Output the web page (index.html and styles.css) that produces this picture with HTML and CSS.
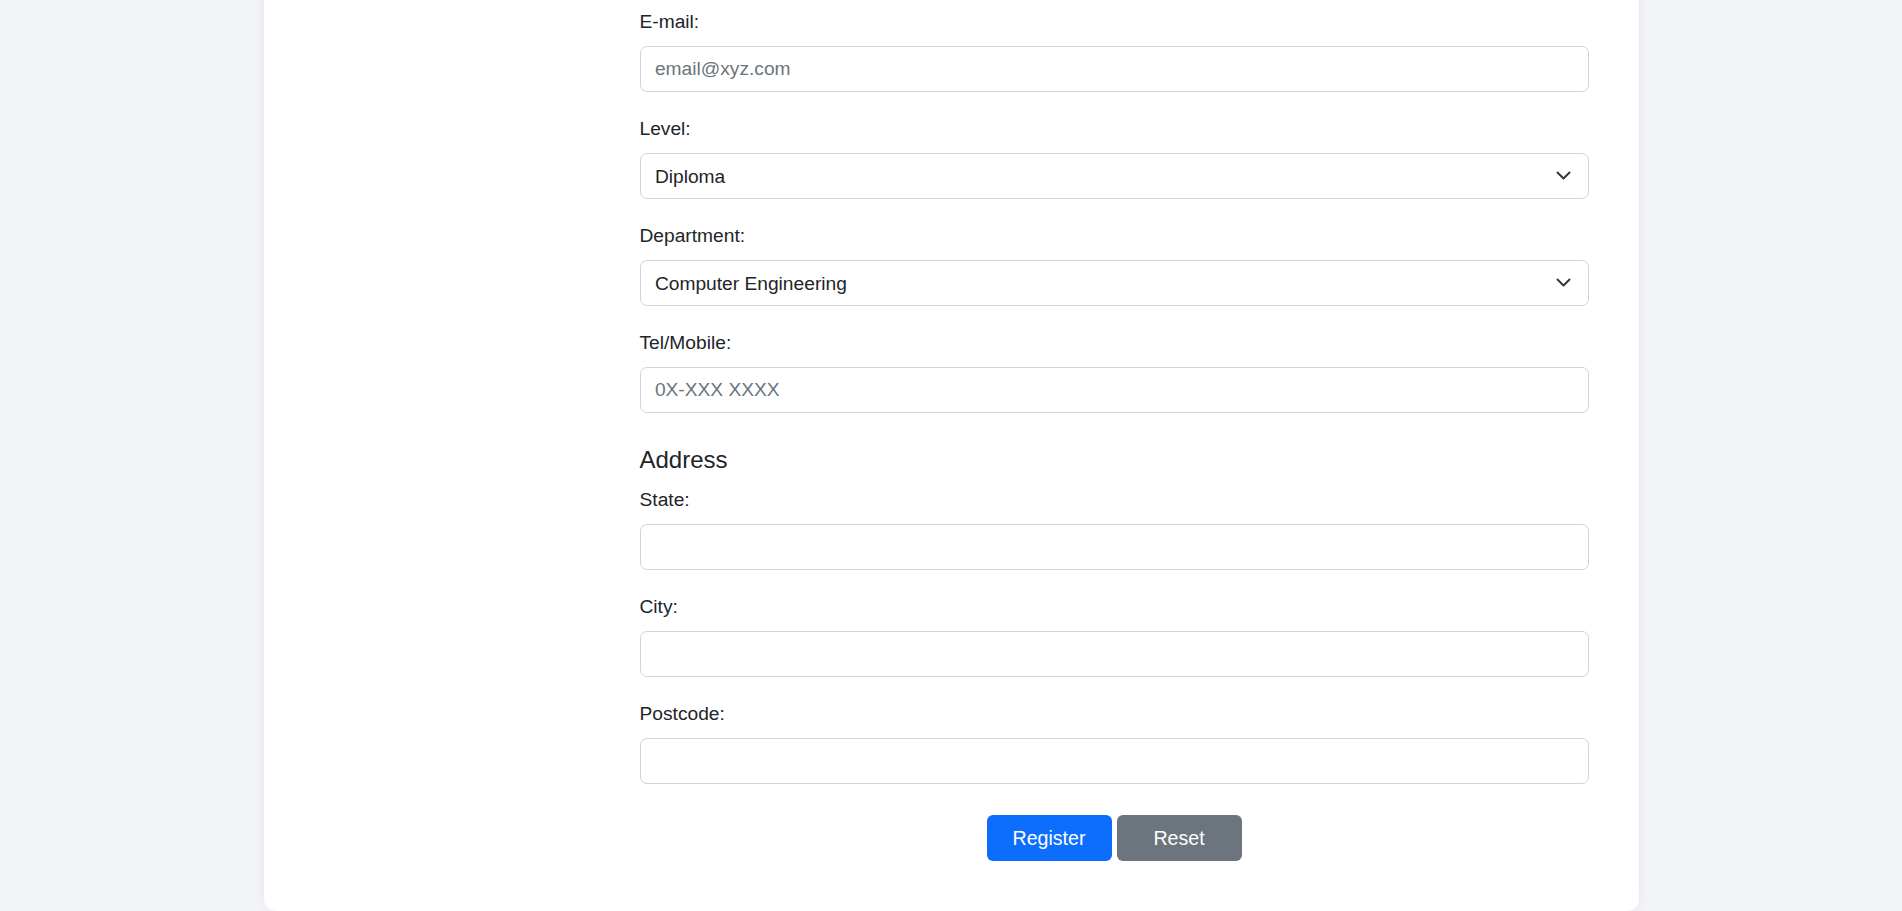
FILE: index.html
```html
<!DOCTYPE html>
<html lang="en">
<head>
<meta charset="utf-8">
<title>Register</title>
<link rel="stylesheet" href="styles.css">
</head>
<body>
<div class="page">
  <div class="card">
    <div class="aside"></div>
    <form class="form">
      <div class="field">
        <label for="email">E-mail:</label>
        <input id="email" class="control" type="email" placeholder="email@xyz.com">
      </div>
      <div class="field">
        <label for="level">Level:</label>
        <div class="select-wrap">
          <select id="level" class="control select">
            <option>Diploma</option>
          </select>
          <svg class="chev" viewBox="0 0 15 9" width="15" height="9"><path d="M1.5 1.5L7.5 7.5L13.5 1.5" fill="none" stroke="#343a40" stroke-width="2" stroke-linecap="round" stroke-linejoin="round"/></svg>
        </div>
      </div>
      <div class="field">
        <label for="dept">Department:</label>
        <div class="select-wrap">
          <select id="dept" class="control select">
            <option>Computer Engineering</option>
          </select>
          <svg class="chev" viewBox="0 0 15 9" width="15" height="9"><path d="M1.5 1.5L7.5 7.5L13.5 1.5" fill="none" stroke="#343a40" stroke-width="2" stroke-linecap="round" stroke-linejoin="round"/></svg>
        </div>
      </div>
      <div class="field">
        <label for="tel">Tel/Mobile:</label>
        <input id="tel" class="control" type="tel" placeholder="0X-XXX XXXX">
      </div>
      <h5 class="section">Address</h5>
      <div class="field">
        <label for="state">State:</label>
        <input id="state" class="control" type="text">
      </div>
      <div class="field">
        <label for="city">City:</label>
        <input id="city" class="control" type="text">
      </div>
      <div class="field">
        <label for="post">Postcode:</label>
        <input id="post" class="control" type="text">
      </div>
      <div class="actions">
        <button type="button" class="btn btn-primary">Register</button>
        <button type="reset" class="btn btn-secondary">Reset</button>
      </div>
    </form>
  </div>
</div>
</body>
</html>
```
FILE: styles.css
```css
html, body {
  margin: 0;
  padding: 0;
}
body {
  background: #f3f4f8;
  font-family: "Liberation Sans", Arial, sans-serif;
  font-size: 19.2px;
  color: #212529;
  overflow: hidden;
}
.page {
  width: 1375px;
  margin: 0 auto;
}
.card {
  margin-top: -20px;
  background: #fff;
  border-radius: 12px;
  box-shadow: 0 0 12px rgba(0, 0, 0, 0.06);
  display: grid;
  grid-template-columns: 376px 949px;
  padding: 27px 50px 50px 0;
}
.form {
  display: flex;
  flex-direction: column;
}
.field {
  margin-bottom: 22px;
}
.field label {
  display: block;
  line-height: 29px;
  margin-bottom: 10px;
}
.control {
  display: block;
  width: 100%;
  height: 46px;
  box-sizing: border-box;
  border: 1px solid #ced4da;
  border-radius: 7px;
  padding: 0 14.4px;
  font-family: inherit;
  font-size: 19.2px;
  color: #212529;
  background: #fff;
  outline: none;
}
.control::placeholder {
  color: #6c757d;
}
.select-wrap {
  position: relative;
}
.select {
  appearance: none;
  -webkit-appearance: none;
  padding-right: 48px;
}
.chev {
  position: absolute;
  right: 18px;
  top: 18px;
  pointer-events: none;
}
.section {
  margin: 10px 0 11px;
  font-size: 24px;
  font-weight: 400;
  line-height: 29px;
}
.actions {
  margin-top: 9px;
  display: flex;
  justify-content: center;
  gap: 5px;
}
.btn {
  width: 125px;
  height: 46px;
  border: none;
  border-radius: 6px;
  color: #fff;
  font-family: inherit;
  font-size: 19.6px;
  cursor: pointer;
}
.btn-primary {
  background: #0d6efd;
}
.btn-secondary {
  background: #6c757d;
}
```
